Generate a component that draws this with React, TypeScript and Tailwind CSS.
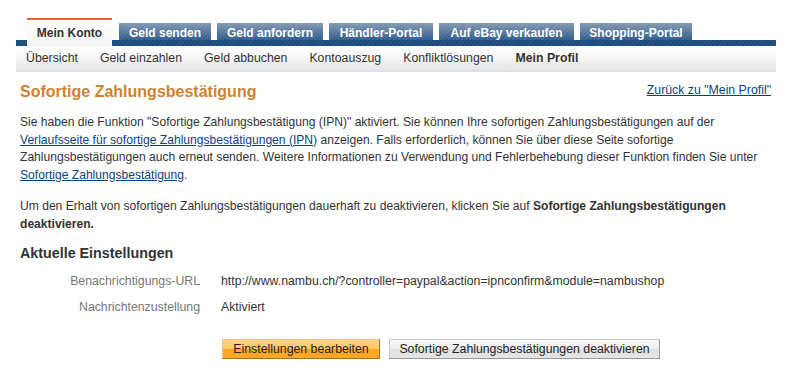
import React from "react";

const tabs = [
  { label: "Geld senden", w: "w-[92px]" },
  { label: "Geld anfordern", w: "w-[106px]" },
  { label: "Händler-Portal", w: "w-[104px]" },
  { label: "Auf eBay verkaufen", w: "w-[135px]" },
  { label: "Shopping-Portal", w: "w-[112px]" },
];

const subNav = [
  "Übersicht",
  "Geld einzahlen",
  "Geld abbuchen",
  "Kontoauszug",
  "Konfliktlösungen",
];

export default function App() {
  return (
    <div className="w-[796px] h-[378px] bg-white font-['Liberation_Sans',Arial,sans-serif] text-[#333]">
      {/* navigation */}
      <div className="ml-[16px] w-[760px] pt-[18px]">
        <div className="flex items-end h-[28px] pl-[11px] gap-[6px] bg-[image:repeating-linear-gradient(135deg,rgba(255,255,255,0.07)_0_1px,transparent_1px_3px),linear-gradient(to_bottom,transparent_22px,#1d4b7c_22px)]">
          <div className="w-[85px] mr-[1px] h-[28px] border-t-2 border-[#e0662c] bg-gradient-to-b from-white to-[#f4f4f4] flex items-center justify-center text-[12px] font-bold text-[#333]">
            Mein Konto
          </div>
          {tabs.map((t) => (
            <div
              key={t.label}
              className={`${t.w} h-[17px] mb-[6px] flex items-center justify-center pt-[2px] text-[12px] font-bold text-white bg-[image:repeating-linear-gradient(135deg,rgba(255,255,255,0.08)_0_1px,transparent_1px_3px),linear-gradient(to_bottom,#8299b2,#2f5b8b)]`}
            >
              {t.label}
            </div>
          ))}
        </div>
        <div className="h-[26px] flex items-center pl-[10px] gap-[22px] text-[12.3px] text-[#333] bg-gradient-to-b from-white via-[#f6f6f6] to-[#e6e6e6] border-b-2 border-[#d7e2f1]">
          {subNav.map((s) => (
            <span key={s}>{s}</span>
          ))}
          <span className="font-bold">Mein Profil</span>
        </div>
      </div>

      {/* content */}
      <div className="px-[20px] text-[12.1px]">
        <div className="flex justify-between items-start mt-[10px] pr-[5px]">
          <h1 className="text-[16px] leading-[20px] font-bold text-[#d0812f]">
            Sofortige Zahlungsbestätigung
          </h1>
          <a href="#" className="text-[12.3px] leading-[16px] text-[#0b3f80] underline">
            Zurück zu "Mein Profil"
          </a>
        </div>

        <p className="mt-[12px] leading-[17.5px]">
          Sie haben die Funktion "Sofortige Zahlungsbestätigung (IPN)" aktiviert. Sie können Ihre sofortigen
          Zahlungsbestätigungen auf der{" "}
          <a href="#" className="text-[#0b3f80] underline">
            Verlaufsseite für sofortige Zahlungsbestätigungen (IPN)
          </a>{" "}
          anzeigen. Falls erforderlich, können Sie über diese Seite sofortige Zahlungsbestätigungen auch erneut
          senden. Weitere Informationen zu Verwendung und Fehlerbehebung dieser Funktion finden Sie unter{" "}
          <a href="#" className="text-[#0b3f80] underline">
            Sofortige Zahlungsbestätigung
          </a>
          .
        </p>

        <p className="mt-[14px] leading-[17.5px]">
          Um den Erhalt von sofortigen Zahlungsbestätigungen dauerhaft zu deaktivieren, klicken Sie auf{" "}
          <b>Sofortige Zahlungsbestätigungen deaktivieren.</b>
        </p>

        <h2 className="mt-[10px] text-[14.3px] leading-[20px] font-bold text-[#333]">Aktuelle Einstellungen</h2>

        <div className="mt-[5px] text-[12.3px]">
          <div className="flex items-center h-[26px]">
            <span className="w-[180px] text-right text-[#777]">Benachrichtigungs-URL</span>
            <span className="ml-[21px]">
              http://www.nambu.ch/?controller=paypal&amp;action=ipnconfirm&amp;module=nambushop
            </span>
          </div>
          <div className="flex items-center h-[26px]">
            <span className="w-[180px] text-right text-[#777]">Nachrichtenzustellung</span>
            <span className="ml-[21px]">Aktiviert</span>
          </div>
        </div>

        <div className="flex gap-[9px] mt-[19px] pl-[202px]">
          <button className="w-[158px] h-[20px] text-[12.3px] text-[#222] border border-[#f3c277] border-r-[#a8701e] border-b-[#a8701e] bg-[linear-gradient(to_bottom,#ffd386_0%,#ffc862_50%,#ffa51f_50%,#ffa726_100%)]">
            Einstellungen bearbeiten
          </button>
          <button className="w-[271px] h-[20px] text-[12.3px] text-[#222] border border-[#c9c9c9] border-r-[#9a9a9a] border-b-[#9a9a9a] bg-[linear-gradient(to_bottom,#f7f7f7_0%,#efefef_50%,#e0e0e0_50%,#e4e4e4_100%)]">
            Sofortige Zahlungsbestätigungen deaktivieren
          </button>
        </div>
      </div>
    </div>
  );
}
